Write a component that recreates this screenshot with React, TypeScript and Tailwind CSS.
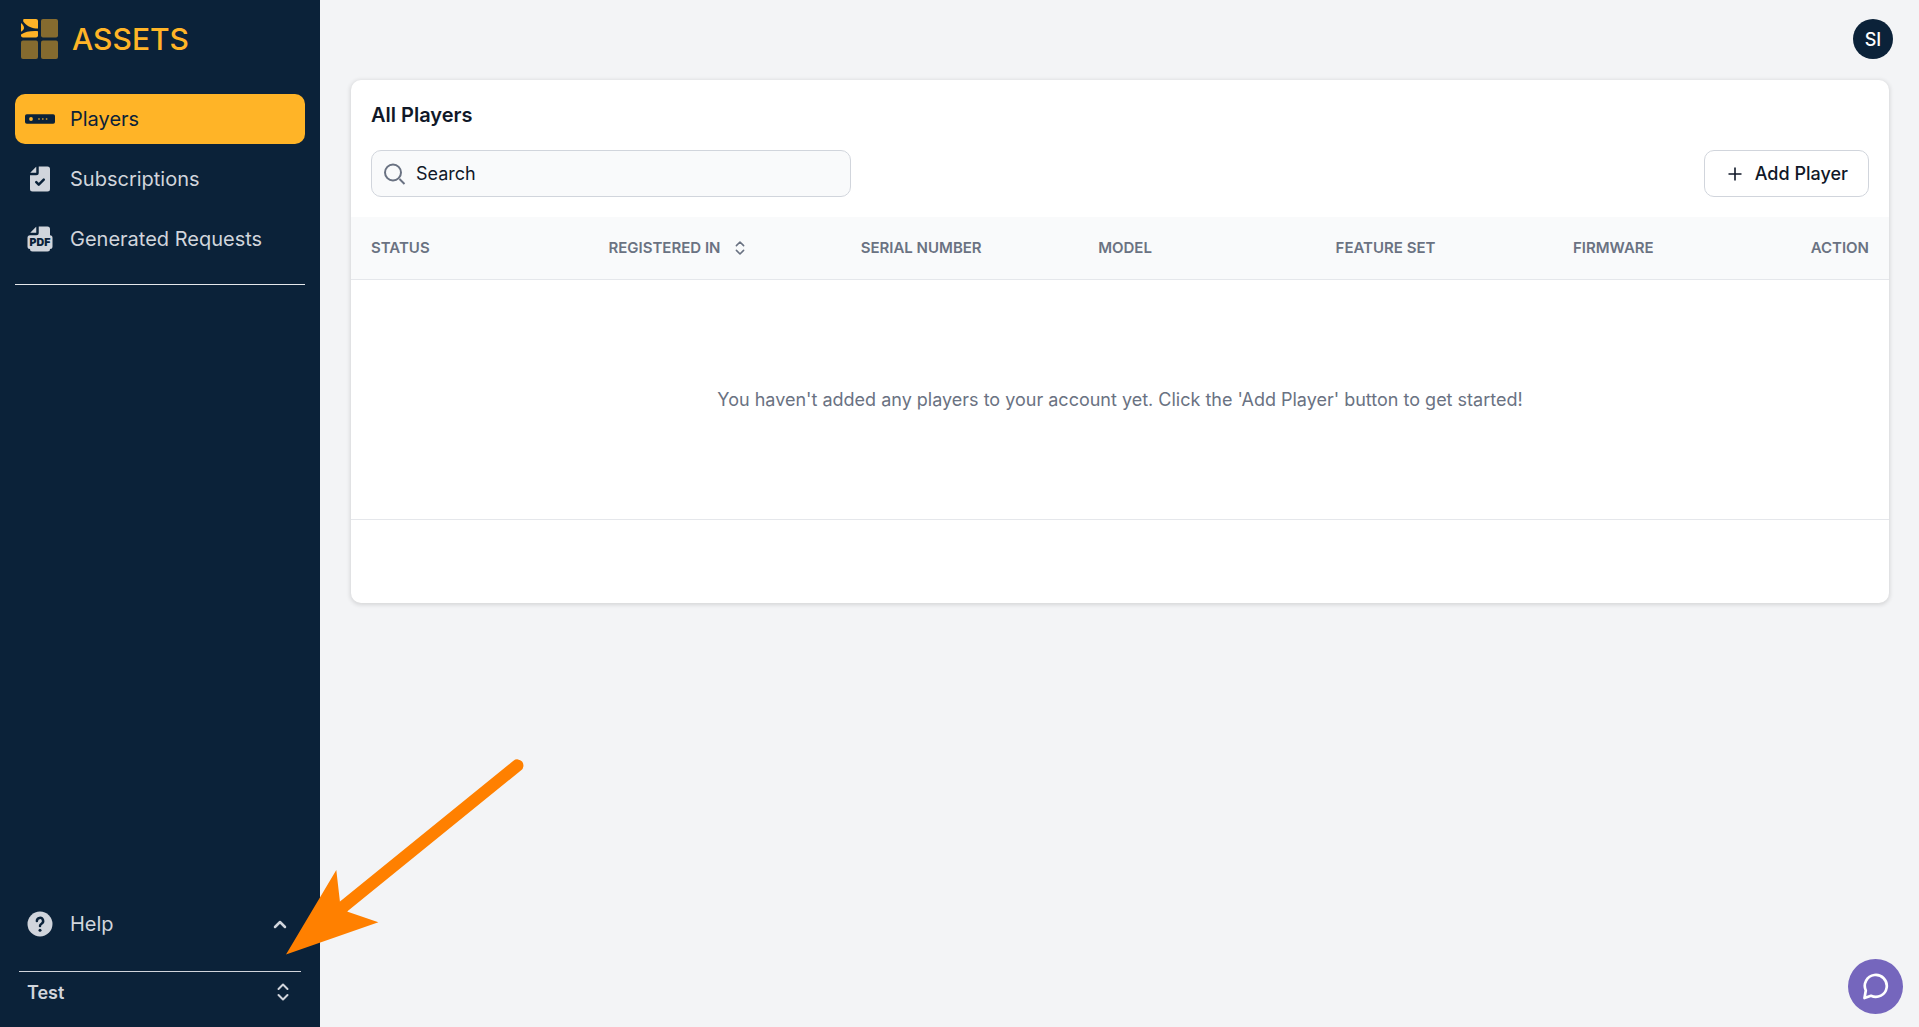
import React from "react";

function Logo() {
  return (
    <svg className="h-10 w-[37px]" viewBox="0 0 37 40" aria-hidden="true">
      <g fill="#ffb427">
        <path d="M3 0H15a2 2 0 0 1 2 2V9.600C12 9.700 6.500 8 2.400 2.800 2 1.500 2 0 3 0Z" />
        <path d="M0 4C2.600 6 3.200 8 2.900 9.600 2.500 11 1.500 12 0 12.800Z" />
        <path d="M0 15.500C4 12.800 10 11.700 17 12.200V16.500a2 2 0 0 1-2 2H2a2 2 0 0 1-2-2Z" />
        <g opacity="0.5">
          <rect x="20" y="0" width="17" height="18.500" rx="2" />
          <rect x="0" y="21.500" width="17" height="18.500" rx="2" />
          <rect x="20" y="21.500" width="17" height="18.500" rx="2" />
        </g>
      </g>
    </svg>
  );
}

function PlayerIcon() {
  return (
    <svg className="h-[30px] w-[30px] shrink-0" viewBox="0 0 30 30" aria-hidden="true">
      <rect x="0" y="10.300" width="30" height="9.400" rx="1.800" fill="#0b2239" />
      <circle cx="6" cy="15" r="1.900" fill="#ffb427" />
      <g fill="#ffb427" opacity="0.7">
        <circle cx="14" cy="15" r="0.900" />
        <circle cx="17.800" cy="15" r="0.900" />
        <circle cx="21.600" cy="15" r="0.900" />
      </g>
    </svg>
  );
}

function FileCheckIcon() {
  return (
    <svg className="h-[30px] w-[30px] shrink-0" viewBox="0 0 24 24" fill="currentColor" aria-hidden="true">
      <path d="M9 2.221V7H4.221a2 2 0 0 1 .365-.5L8.500 2.586A2 2 0 0 1 9 2.221Z" />
      <path d="M11 2v5a2 2 0 0 1-2 2H4v11a2 2 0 0 0 2 2h12a2 2 0 0 0 2-2V4a2 2 0 0 0-2-2h-7Z" />
      <path d="m9 14.500 2 2 4-4" fill="none" stroke="#0b2239" strokeWidth="2" strokeLinecap="round" strokeLinejoin="round" />
    </svg>
  );
}

function FilePdfIcon() {
  return (
    <svg className="h-[30px] w-[30px] shrink-0" viewBox="0 0 24 24" fill="currentColor" aria-hidden="true">
      <path d="M9 2.221V7H4.221a2 2 0 0 1 .365-.5L8.500 2.586A2 2 0 0 1 9 2.221Z" />
      <path d="M11 2v5a2 2 0 0 1-2 2H4a2 2 0 0 0-2 2v7a2 2 0 0 0 2 2 2 2 0 0 0 2 2h12a2 2 0 0 0 2-2 2 2 0 0 0 2-2v-7a2 2 0 0 0-2-2V4a2 2 0 0 0-2-2h-7Z" />
      <text x="12" y="17.600" textAnchor="middle" fontFamily="Inter, sans-serif" fontSize="8.500" fontWeight="900" fill="#0b2239">PDF</text>
    </svg>
  );
}

function HelpIcon() {
  return (
    <svg className="h-[30px] w-[30px] shrink-0" viewBox="0 0 24 24" aria-hidden="true">
      <circle cx="12" cy="12" r="10" fill="currentColor" />
      <path d="M9.500 9.600A2.500 2.500 0 1 1 13.200 11.800C12.500 12.200 12 12.700 12 13.600" fill="none" stroke="#0b2239" strokeWidth="2" strokeLinecap="round" />
      <circle cx="12" cy="17" r="1.200" fill="#0b2239" />
    </svg>
  );
}

function UpDownIcon({ className }: { className: string }) {
  return (
    <svg className={className} viewBox="0 0 20 20" fill="none" stroke="currentColor" strokeWidth="2" strokeLinecap="round" strokeLinejoin="round" aria-hidden="true">
      <path d="m5.500 7 4.500-4.500L14.500 7M5.500 13l4.500 4.500 4.500-4.500" />
    </svg>
  );
}

function NavLink({ icon, label, active }: { icon: React.ReactNode; label: string; active?: boolean }) {
  return (
    <a
      href="#"
      aria-current={active ? "page" : undefined}
      className={
        active
          ? "flex h-[50px] items-center gap-[15px] rounded-[10px] bg-[#ffb427] px-2.5 text-xl text-[#0b2239]"
          : "flex h-[50px] items-center gap-[15px] rounded-[10px] px-2.5 text-xl text-gray-300"
      }
    >
      {icon}
      <span>{label}</span>
    </a>
  );
}

function Sidebar() {
  return (
    <aside className="flex w-80 shrink-0 flex-col bg-[#0b2239] text-gray-300">
      <div className="flex items-center gap-3.5 px-[21px] pt-[19px]">
        <Logo />
        <span className="text-3xl leading-10 font-medium text-[#ffb427]">ASSETS</span>
      </div>
      <nav className="mx-[15px] mt-[35px] flex flex-col gap-2.5 border-b border-gray-200 pb-5">
        <NavLink active icon={<PlayerIcon />} label="Players" />
        <NavLink icon={<FileCheckIcon />} label="Subscriptions" />
        <NavLink icon={<FilePdfIcon />} label="Generated Requests" />
      </nav>
      <div className="mt-auto px-[15px]">
        <button type="button" aria-expanded="true" className="flex h-[50px] w-full items-center gap-[15px] px-2.5 text-xl">
          <HelpIcon />
          <span>Help</span>
          <svg className="mr-[5px] ml-auto h-5 w-5" viewBox="0 0 20 20" fill="none" stroke="currentColor" strokeWidth="2.500" strokeLinecap="round" strokeLinejoin="round" aria-hidden="true">
            <path d="m5 13 5-5 5 5" />
          </svg>
        </button>
      </div>
      <div className="mx-[19px] mt-[22px] border-t border-gray-300 pb-[15px]">
        <button type="button" className="flex h-10 w-full items-center justify-between px-2 text-[18px] font-semibold">
          <span>Test</span>
          <UpDownIcon className="h-5 w-5" />
        </button>
      </div>
    </aside>
  );
}

function PlayersTable() {
  return (
    <table className="w-full table-fixed border-collapse text-left">
      <colgroup>
        <col className="w-[15.44%]" />
        <col className="w-[16.4%]" />
        <col className="w-[15.44%]" />
        <col className="w-[15.44%]" />
        <col className="w-[15.44%]" />
        <col className="w-[15.44%]" />
        <col />
      </colgroup>
      <thead className="bg-gray-50 text-[15px] text-gray-500">
        <tr className="h-[62px] border-b border-gray-200">
          <th className="px-5 font-semibold">STATUS</th>
          <th className="px-5 font-semibold">
            <button type="button" className="flex items-center gap-3">
              REGISTERED IN
              <UpDownIcon className="h-4 w-4" />
            </button>
          </th>
          <th className="px-5 font-semibold">SERIAL NUMBER</th>
          <th className="px-5 font-semibold">MODEL</th>
          <th className="px-5 font-semibold">FEATURE SET</th>
          <th className="px-5 font-semibold">FIRMWARE</th>
          <th className="pr-5 text-right font-semibold">ACTION</th>
        </tr>
      </thead>
      <tbody>
        <tr className="h-60 border-b border-gray-200">
          <td colSpan={7} className="text-center text-[18px] text-gray-500">
            You haven't added any players to your account yet. Click the 'Add Player' button to get started!
          </td>
        </tr>
      </tbody>
    </table>
  );
}

export default function App() {
  return (
    <div className="relative flex min-h-screen bg-gray-100 font-[Inter,sans-serif]">
      <Sidebar />
      <main className="min-w-0 flex-1 pl-[31px] pr-[30px]">
        <header className="flex h-20 items-start justify-end pt-[19px]">
          <button type="button" className="-mr-1 h-10 w-10 rounded-full bg-[#0b2239] text-[18px] font-medium text-white">SI</button>
        </header>
        <section className="overflow-hidden rounded-[10px] bg-white pb-[83px] shadow-[0_1px_4px_1px_rgba(0,0,0,0.12)]">
          <div className="p-5">
            <h1 className="text-xl leading-[30px] font-semibold text-gray-900">All Players</h1>
            <div className="mt-5 flex items-center justify-between">
              <div className="flex h-[47px] w-[480px] items-center gap-2.5 rounded-[10px] border border-gray-300 bg-gray-50 px-3">
                <svg className="h-[22px] w-[22px] shrink-0 text-gray-500" viewBox="0 0 22 22" fill="none" stroke="currentColor" strokeWidth="2" aria-hidden="true">
                  <circle cx="9" cy="9.500" r="8" />
                  <path d="m15.500 16 5 5" />
                </svg>
                <input type="text" aria-label="Search" placeholder="Search" className="min-w-0 flex-1 text-[18px] text-gray-900 outline-none placeholder:text-gray-900" />
              </div>
              <button type="button" className="flex h-[47px] items-center gap-2.5 rounded-[10px] border border-gray-300 px-5 text-[18px] font-medium text-gray-900">
                <svg className="h-5 w-5" viewBox="0 0 20 20" fill="none" stroke="currentColor" strokeWidth="1.600" aria-hidden="true">
                  <path d="M10 3.500v13M3.500 10h13" />
                </svg>
                Add Player
              </button>
            </div>
          </div>
          <PlayersTable />
        </section>
      </main>

      <svg className="pointer-events-none absolute bottom-[70px] left-[284px] h-[200px] w-[244px]" viewBox="284 757 244 200" aria-hidden="true">
        <path d="M517.300 765.500 338 911" stroke="#ff8000" strokeWidth="12.300" strokeLinecap="round" />
        <path d="M286 954.500 336.300 870 340 902.300 347.700 911.700 378.400 922.300Z" fill="#ff8000" />
      </svg>

      <button type="button" aria-label="Open chat" className="fixed right-4 bottom-[13px] flex h-[55px] w-[55px] items-center justify-center rounded-full bg-[#7566bd] text-white">
        <svg className="h-7 w-7" viewBox="0 0 28 28" fill="none" stroke="currentColor" strokeWidth="2.700" strokeLinejoin="round" aria-hidden="true">
          <path d="M3.800 17.500A11 11 0 1 1 9 22.800L2.500 25Z" />
        </svg>
      </button>
    </div>
  );
}
